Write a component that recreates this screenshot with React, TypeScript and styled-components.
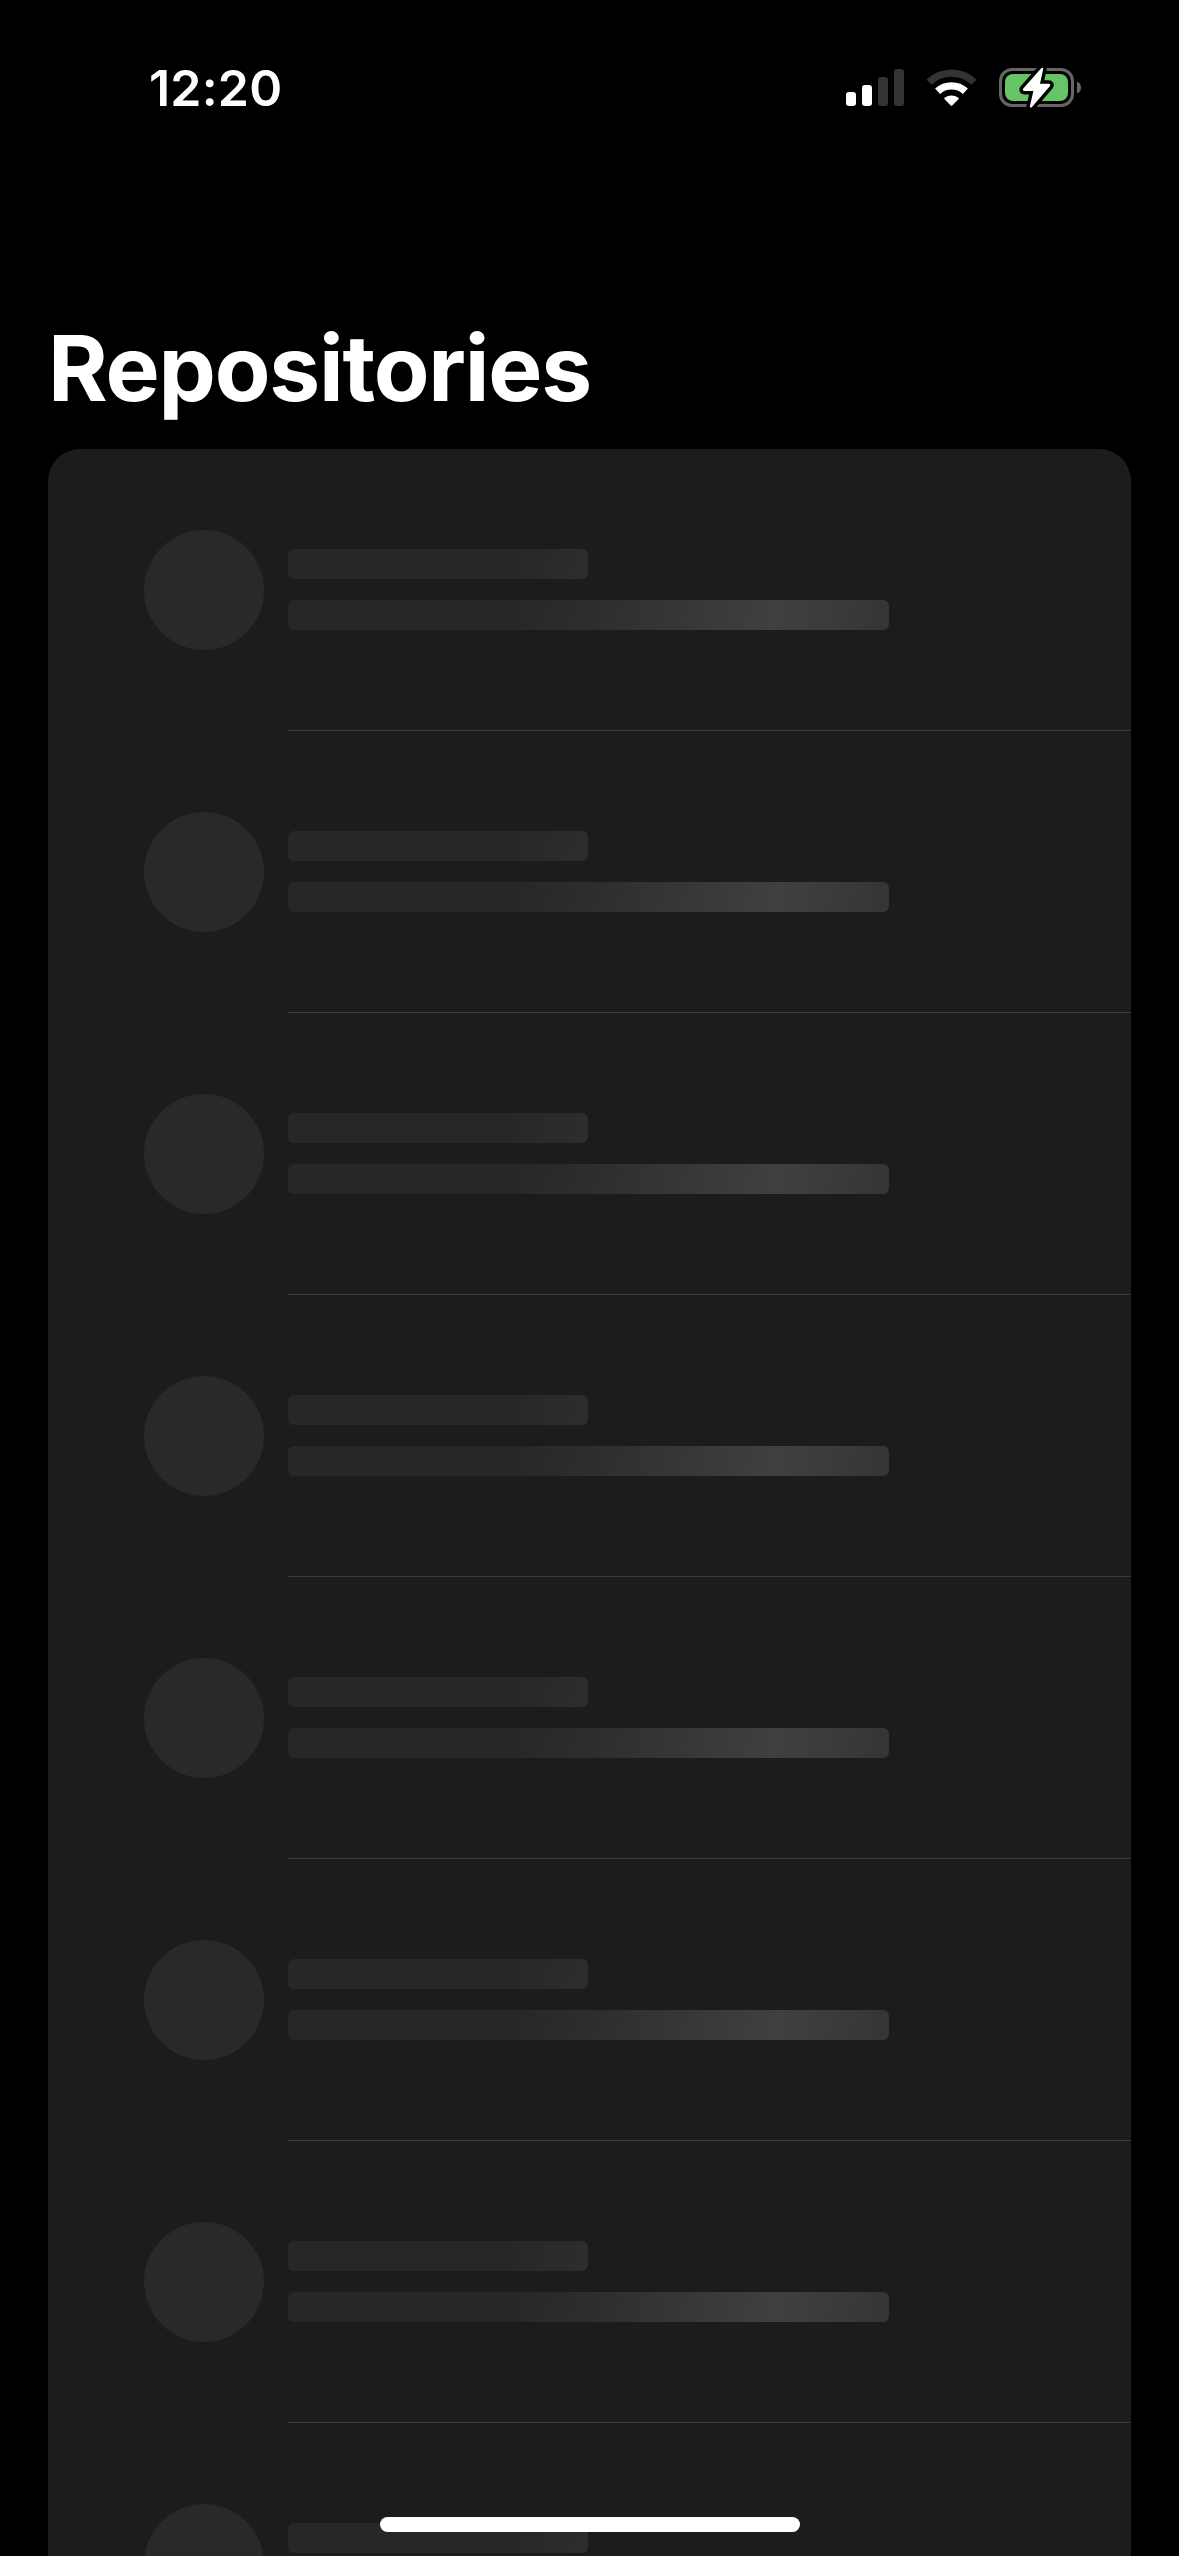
import React from "react";
import styled, { createGlobalStyle } from "styled-components";

const GlobalStyle = createGlobalStyle`
  * { box-sizing: border-box; }
  html, body { margin: 0; background: #000; }
`;

const Screen = styled.div`
  position: relative;
  display: flex;
  flex-direction: column;
  width: 1179px;
  height: 2556px;
  overflow: hidden;
  background: #000;
  color: #fff;
  font-family: Inter, "Liberation Sans", sans-serif;
`;

const StatusBar = styled.header`
  flex: none;
  display: flex;
  justify-content: space-between;
  align-items: center;
  height: 176px;
  padding: 0 98px 0 149px;
`;

const Clock = styled.time`
  font-size: 50px;
  line-height: 60px;
  font-weight: 600;
  letter-spacing: 0.2px;
`;

const StatusIcons = styled.div`
  display: flex;
  align-items: center;
  gap: 22px;
`;

const Title = styled.h1`
  flex: none;
  margin: 132px 0 0 48px;
  height: 141px;
  font-size: 91px;
  line-height: 120px;
  font-weight: 700;
  letter-spacing: -1.2px;
`;

const List = styled.ul`
  flex: none;
  margin: 0 48px;
  padding: 0;
  list-style: none;
  background: #1c1c1c;
  border-radius: 32px 32px 0 0;
`;

const Row = styled.li`
  display: flex;
  gap: 24px;
  height: 282px;
  padding-left: 96px;
`;

const Avatar = styled.div`
  flex: none;
  width: 120px;
  height: 120px;
  margin-top: 81px;
  border-radius: 50%;
  background: #29292b;
`;

const Lines = styled.div`
  flex: 1;
  display: flex;
  flex-direction: column;
  gap: 21px;
  padding-top: 100px;
  border-bottom: 1px solid #3a3a3a;
`;

const Line = styled.div<{ $width: number }>`
  width: ${(p) => p.$width}px;
  height: 30px;
  border-radius: 6px;
  background: linear-gradient(
    101deg,
    #272727 0,
    #272727 222px,
    #2e2e2f 305px,
    #404041 483px,
    #353536 595px
  );
`;

const HomeIndicator = styled.div`
  position: absolute;
  left: 380px;
  bottom: 24px;
  width: 420px;
  height: 15px;
  border-radius: 8px;
  background: #fff;
`;

const SignalIcon = () => (
  <svg width="58" height="42" viewBox="846 67 58 42">
    <rect x="846" y="92" width="10" height="14" rx="3" fill="#fff" />
    <rect x="862" y="85" width="10" height="21" rx="3" fill="#fff" />
    <rect x="878" y="77" width="10" height="29" rx="3" fill="#333" />
    <rect x="894" y="69" width="10" height="37" rx="3" fill="#333" />
  </svg>
);

const WifiIcon = () => (
  <svg width="51" height="42" viewBox="926 67 51 42">
    <path d="M929 82.2A32.5 32.5 0 0 1 974 82.2" fill="none" stroke="#333" strokeWidth="7.4" />
    <path d="M937.6 91.3A20.5 20.5 0 0 1 965.4 91.3" fill="none" stroke="#fff" strokeWidth="7.4" />
    <path d="M944.6 97.8A11.5 11.5 0 0 1 958.4 97.8Q959.2 98.4 958.4 99.2L952.2 105.5Q951.5 106.2 950.8 105.5L944.6 99.2Q943.8 98.4 944.6 97.8Z" fill="#fff" />
  </svg>
);

const BOLT =
  "M1041.2 68.2L1023.3 88.6Q1022 91 1024.8 91H1033.4L1029.8 106.5Q1030 108.2 1031.8 107.2L1049.8 86.3Q1051.2 83.7 1048.4 83.7H1040L1043.2 69Q1043 67 1041.2 68.2Z";

const BatteryIcon = () => (
  <svg width="82" height="42" viewBox="999 67 82 42">
    <rect x="1000.5" y="69.5" width="72" height="36" rx="11.5" fill="none" stroke="#666" strokeWidth="3" />
    <rect x="1005" y="74" width="63" height="27" rx="8" fill="#65c466" />
    <path d="M1077 81.5Q1081 83 1081 87.5T1077 93.5Z" fill="#666" />
    <path d={BOLT} fill="#000" stroke="#000" strokeWidth="7" strokeLinejoin="round" />
    <path d={BOLT} fill="#fff" />
  </svg>
);

export default function App() {
  return (
    <Screen>
      <GlobalStyle />
      <StatusBar>
        <Clock>12:20</Clock>
        <StatusIcons>
          <SignalIcon />
          <WifiIcon />
          <BatteryIcon />
        </StatusIcons>
      </StatusBar>
      <Title>Repositories</Title>
      <List>
        {Array.from({ length: 8 }, (_, i) => (
          <Row key={i}>
            <Avatar />
            <Lines>
              <Line $width={300} />
              <Line $width={601} />
            </Lines>
          </Row>
        ))}
      </List>
      <HomeIndicator />
    </Screen>
  );
}
